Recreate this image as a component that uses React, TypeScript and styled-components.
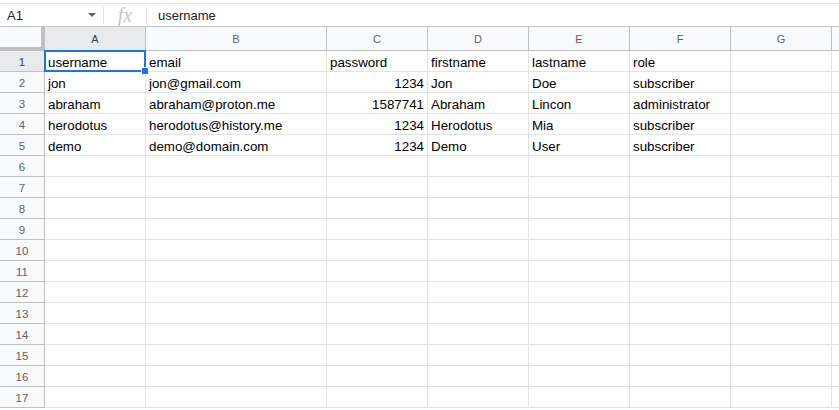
import React from 'react';
import styled, { createGlobalStyle } from 'styled-components';

const GlobalStyle = createGlobalStyle`
  html, body {
    margin: 0;
    padding: 0;
    background: #ffffff;
    overflow: hidden;
  }
  * {
    box-sizing: border-box;
  }
`;

const columns = ['A', 'B', 'C', 'D', 'E', 'F', 'G'];
const widths = [101, 181, 101, 101, 101, 101, 101];

const rows: (string | number)[][] = [
  ['username', 'email', 'password', 'firstname', 'lastname', 'role'],
  ['jon', 'jon@gmail.com', 1234, 'Jon', 'Doe', 'subscriber'],
  ['abraham', 'abraham@proton.me', 1587741, 'Abraham', 'Lincon', 'administrator'],
  ['herodotus', 'herodotus@history.me', 1234, 'Herodotus', 'Mia', 'subscriber'],
  ['demo', 'demo@domain.com', 1234, 'Demo', 'User', 'subscriber'],
];

const TOTAL_ROWS = 17;

export default function App() {
  const body = [];
  for (let r = 0; r < TOTAL_ROWS; r++) {
    const data = rows[r] || [];
    body.push(
      <RowHeader key={`h${r}`} $active={r === 0}>{r + 1}</RowHeader>
    );
    columns.forEach((_, c) => {
      const value = data[c];
      const numeric = typeof value === 'number';
      body.push(
        <Cell key={`${r}-${c}`} $numeric={numeric}>
          {value}
          {r === 0 && c === 0 && (
            <Selection>
              <Handle />
            </Selection>
          )}
        </Cell>
      );
    });
    // the next column, only partly in view
    body.push(<Cell key={`${r}-rest`} $numeric={false} />);
  }

  return <>
    <GlobalStyle />
    <Wrapper>
      <FormulaBar>
        <NameBox>
          A1
          <Caret />
        </NameBox>
        <Divider />
        <Fx>fx</Fx>
        <Divider />
        <FormulaText>username</FormulaText>
      </FormulaBar>
      <Grid $widths={widths}>
        <Corner />
        {columns.map((col, i) => (
          <ColHeader key={col} $active={i === 0}>{col}</ColHeader>
        ))}
        <ColHeader $active={false} />
        {body}
      </Grid>
    </Wrapper>
  </>
}

const Wrapper = styled.div`
  width: 839px;
  height: 410px;
  overflow: hidden;
  padding-top: 3px;
  font-family: "Liberation Sans", Arial, sans-serif;
`

const FormulaBar = styled.div`
  display: flex;
  align-items: center;
  height: 24px;
  border-top: 1px solid #e1e3e6;
  border-bottom: 1px solid #c4c7c5;
`

const NameBox = styled.div`
  display: flex;
  align-items: center;
  justify-content: space-between;
  width: 103px;
  padding: 0 7px 0 7px;
  font-size: 13px;
  color: #202124;
`

const Caret = styled.span`
  width: 0;
  height: 0;
  border-left: 4px solid transparent;
  border-right: 4px solid transparent;
  border-top: 4px solid #5f6368;
`

const Divider = styled.div`
  width: 1px;
  height: 18px;
  background: #e1e3e6;
`

const Fx = styled.div`
  width: 42px;
  text-align: center;
  font-family: "Liberation Serif", "Times New Roman", serif;
  font-style: italic;
  font-size: 20px;
  color: #c4c7c5;
  line-height: 22px;
`

const FormulaText = styled.div`
  padding-left: 11px;
  font-size: 13px;
  color: #202124;
`

const Grid = styled.div<{ $widths: number[] }>`
  display: grid;
  grid-template-columns: 45px ${p => p.$widths.map(w => `${w}px`).join(' ')} 100px;
  grid-auto-rows: 21px;
  grid-template-rows: 24px;
`

const Corner = styled.div`
  background: #f8f9fa;
  border-right: 4px solid #c0c0c0;
  border-bottom: 4px solid #c0c0c0;
`

const HeaderBase = styled.div<{ $active: boolean }>`
  display: flex;
  align-items: center;
  justify-content: center;
  background: ${p => p.$active ? '#e8eaed' : '#f8f9fa'};
  border-right: 1px solid #c0c0c0;
  border-bottom: 1px solid #c0c0c0;
  font-size: 11px;
  color: ${p => p.$active ? '#3c4043' : '#5f6368'};
`

const ColHeader = styled(HeaderBase)`
  padding-top: 1px;
`

const RowHeader = styled(HeaderBase)`
  font-size: 11.5px;
  padding-top: 1px;
`

const Cell = styled.div<{ $numeric: boolean }>`
  position: relative;
  display: flex;
  align-items: center;
  justify-content: ${p => p.$numeric ? 'flex-end' : 'flex-start'};
  padding: 2px 3px 0;
  border-right: 1px solid #e2e3e3;
  border-bottom: 1px solid #e2e3e3;
  font-size: 10pt;
  color: #000000;
  white-space: nowrap;
`

const Selection = styled.div`
  position: absolute;
  z-index: 2;
  left: -1px;
  top: -1px;
  right: -1px;
  bottom: -1px;
  border: 2px solid #1a73e8;
  pointer-events: none;
`

const Handle = styled.div`
  position: absolute;
  right: -5px;
  bottom: -5px;
  width: 8px;
  height: 8px;
  background: #1a73e8;
  border: 1px solid #ffffff;
`
